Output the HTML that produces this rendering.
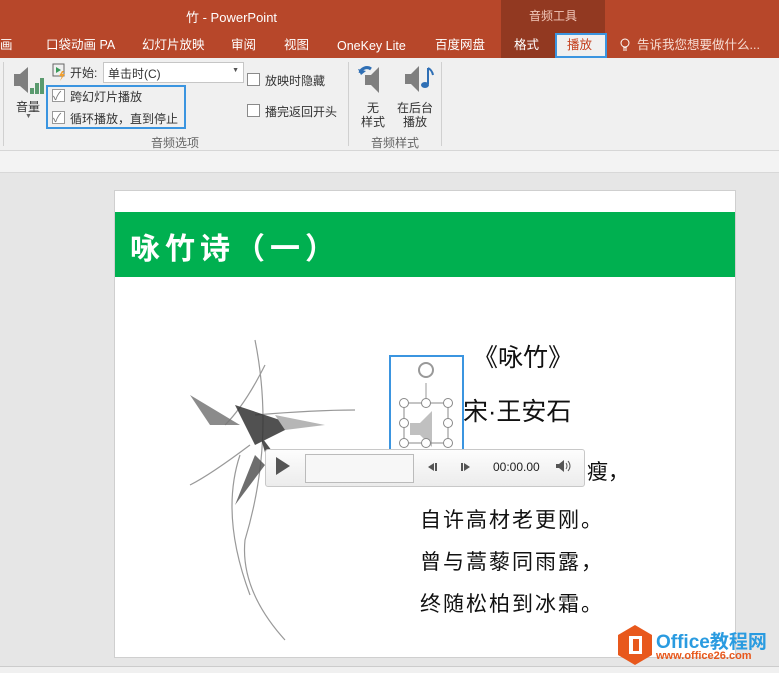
<!DOCTYPE html>
<html><head><meta charset="utf-8"><style>
*{margin:0;padding:0;box-sizing:border-box}
body{width:779px;height:673px;overflow:hidden;background:#e6e6e6;font-family:"Liberation Sans","Noto Sans CJK SC",sans-serif;position:relative;font-size:12px;color:#333}
.a{position:absolute;white-space:nowrap}
.t{position:absolute;white-space:nowrap;top:36px;color:#fff;font-size:12.5px;line-height:18px}
.cb{position:absolute;width:13px;height:13px;border:1px solid #8a8a8a;background:#fff}
</style></head><body>
<div class="a" style="left:0;top:0;width:779px;height:58px;background:#b7472a"></div>
<div class="a" style="left:501px;top:0;width:104px;height:58px;background:#923921"></div>
<div class="a" style="left:186px;top:7px;color:#fff;font-size:13px">竹 - PowerPoint</div>
<div class="a" style="left:529px;top:7px;color:#f3c9bb;font-size:12px">音频工具</div>
<div class="t" style="left:0">画</div>
<div class="t" style="left:46px">口袋动画 PA</div>
<div class="t" style="left:142px">幻灯片放映</div>
<div class="t" style="left:231px">审阅</div>
<div class="t" style="left:284px">视图</div>
<div class="t" style="left:337px;top:37px">OneKey Lite</div>
<div class="t" style="left:435px">百度网盘</div>
<div class="t" style="left:514px">格式</div>
<div class="a" style="top:33px;left:555px;width:52px;height:25px;background:#f0f0f0;border:2px solid #3b95e0"></div>
<div class="t" style="left:567px;color:#c43e1c">播放</div>
<svg class="a" style="left:620px;top:38px" width="10" height="15"><circle cx="5" cy="5" r="4" fill="none" stroke="#fff"/><path d="M3 10h4M3 12h4" stroke="#fff"/></svg>
<div class="t" style="left:637px;color:#f6dcd3">告诉我您想要做什么...</div>
<div class="a" style="left:0;top:58px;width:779px;height:93px;background:#f0f0f0;border-bottom:1px solid #d6d6d6"></div>
<div class="a" style="left:0;top:151px;width:779px;height:22px;background:#f3f3f3;border-bottom:1px solid #d8d8d8"></div>
<div class="a" style="left:3px;top:62px;width:1px;height:84px;background:#d0d0d0"></div>
<div class="a" style="left:348px;top:62px;width:1px;height:84px;background:#d0d0d0"></div>
<div class="a" style="left:441px;top:62px;width:1px;height:84px;background:#d0d0d0"></div>
<svg class="a" style="left:12px;top:64px" width="34" height="34"><path d="M2 10h6l8-7v26l-8-7H2z" fill="#7f7f7f"/><rect x="18" y="24" width="4" height="6" fill="#5a9a6e"/><rect x="23" y="19" width="4" height="11" fill="#5a9a6e"/><rect x="28" y="14" width="4" height="16" fill="#5a9a6e"/></svg>
<div class="a" style="left:16px;top:98px">音量</div>
<div class="a" style="left:25px;top:113px;font-size:7px;color:#666">▼</div>
<svg class="a" style="left:52px;top:63px" width="16" height="18"><rect x="1" y="1" width="11" height="12" fill="none" stroke="#666"/><path d="M4 4l5 3-5 3z" fill="#3a9a5a"/><path d="M10 8l-3 5h3l-2 5 5-7h-3l2-3z" fill="#f0a030"/></svg>
<div class="a" style="left:70px;top:64px">开始:</div>
<div class="a" style="left:103px;top:62px;width:141px;height:21px;background:#fff;border:1px solid #c6c6c6;padding:2px 4px">单击时(C)<span style="position:absolute;right:4px;top:4px;font-size:7px;color:#555">▼</span></div>
<div class="a" style="left:46px;top:85px;width:140px;height:44px;border:2px solid #3b95e0"></div>
<div class="cb" style="left:52px;top:89px;border-color:#999"></div><div class="a" style="left:53px;top:87px;color:#777;font-size:12px">✓</div>
<div class="a" style="left:70px;top:88px">跨幻灯片播放</div>
<div class="cb" style="left:52px;top:111px;border-color:#999"></div><div class="a" style="left:53px;top:109px;color:#777;font-size:12px">✓</div>
<div class="a" style="left:70px;top:110px">循环播放，直到停止</div>
<div class="cb" style="left:247px;top:73px"></div><div class="a" style="left:265px;top:72px">放映时隐藏</div>
<div class="cb" style="left:247px;top:104px"></div><div class="a" style="left:265px;top:103px">播完返回开头</div>
<div class="a" style="left:151px;top:134px;color:#666">音频选项</div>
<svg class="a" style="left:357px;top:63px" width="30" height="34"><path d="M8 12h6l8-8v26l-8-8H8z" fill="#7f7f7f"/><path d="M3 10a7 7 0 0 1 11-4" stroke="#2f6fb5" stroke-width="3" fill="none"/><path d="M1 6l3 6 5-4z" fill="#2f6fb5"/></svg>
<div class="a" style="left:367px;top:99px">无</div><div class="a" style="left:361px;top:113px">样式</div>
<svg class="a" style="left:403px;top:64px" width="32" height="34"><path d="M2 10h6l8-8v26l-8-8H2z" fill="#7f7f7f"/><path d="M25 4v16" stroke="#2f6fb5" stroke-width="2"/><ellipse cx="22" cy="21" rx="4" ry="3" fill="#2f6fb5"/><path d="M25 4q4 2 5 7" stroke="#2f6fb5" stroke-width="2" fill="none"/></svg>
<div class="a" style="left:397px;top:99px">在后台</div><div class="a" style="left:403px;top:113px">播放</div>
<div class="a" style="left:371px;top:134px;color:#666">音频样式</div>
<div class="a" style="left:114px;top:190px;width:622px;height:468px;background:#fff;border:1px solid #cfcfcf"></div>
<div class="a" style="left:115px;top:212px;width:620px;height:65px;background:#00b050"></div>
<div class="a" style="left:130px;top:224px;color:#fff;font-size:30px;font-weight:bold;letter-spacing:5px;font-family:'Noto Sans CJK SC',sans-serif">咏竹诗（一）</div>
<svg class="a" style="left:155px;top:335px" width="200" height="310"><g stroke="#999" fill="none" stroke-width="1.2"><path d="M100 5q20 100 -10 200 q-5 50 40 100"/><path d="M110 30q-20 40 -40 60"/><path d="M100 80q60 -5 100 -5"/><path d="M95 110q-40 30 -60 40"/><path d="M85 120q-20 60 10 140"/></g><g fill="#333" opacity=".85"><path d="M80 70l60 20-40 20z"/><path d="M85 90l-50 -30 20 30z" fill="#777"/><path d="M105 100l30 40-20-5z"/><path d="M120 80l50 10-40 5z" fill="#aaa"/><path d="M100 120l-20 50 30-40z" fill="#555"/></g></svg>
<div class="a" style="left:473px;top:338px;font-size:25px;color:#111">《咏竹》</div>
<div class="a" style="left:463px;top:392px;font-size:25px;color:#111">宋·王安石</div>
<div class="a" style="left:587px;top:456px;font-size:21px;color:#111">瘦，</div>
<div class="a" style="left:420px;top:500px;font-size:21px;color:#111;line-height:42px;letter-spacing:2px">自许高材老更刚。<br>曾与蒿藜同雨露，<br>终随松柏到冰霜。</div>
<div class="a" style="left:389px;top:355px;width:75px;height:97px;border:2px solid #3b95e0"></div>
<svg class="a" style="left:396px;top:355px" width="60" height="95"><path d="M30 28v20" stroke="#999"/><circle cx="30" cy="15" r="7" fill="none" stroke="#999" stroke-width="2"/><path d="M14 68h10l12-12v36l-12-12H14z" fill="#c0c0c0"/><rect x="8" y="48" width="44" height="40" fill="none" stroke="#888"/><g fill="#fff" stroke="#888"><circle cx="8" cy="48" r="4.5"/><circle cx="30" cy="48" r="4.5"/><circle cx="52" cy="48" r="4.5"/><circle cx="8" cy="68" r="4.5"/><circle cx="52" cy="68" r="4.5"/><circle cx="8" cy="88" r="4.5"/><circle cx="30" cy="88" r="4.5"/><circle cx="52" cy="88" r="4.5"/></g></svg>
<div class="a" style="left:265px;top:449px;width:320px;height:38px;background:linear-gradient(#fdfdfd,#ececec);border:1px solid #c8c8c8;border-radius:3px"></div>
<div class="a" style="left:276px;top:457px;width:0;height:0;border-left:14px solid #555;border-top:9px solid transparent;border-bottom:9px solid transparent"></div>
<div class="a" style="left:305px;top:454px;width:109px;height:29px;background:#f7f7f7;border:1px solid #bbb"></div>
<svg class="a" style="left:426px;top:461px" width="50" height="12"><path d="M8 2v8L2 6z M9 2h2v8H9z" fill="#555"/><path d="M35 2h2v8h-2z M38 2v8l6-4z" fill="#555"/></svg>
<div class="a" style="left:493px;top:460px;font-size:12px;color:#222">00:00.00</div>
<svg class="a" style="left:555px;top:459px" width="18" height="14"><path d="M1 5h3l5-4v12l-5-4H1z" fill="#555"/><path d="M11 4q2 3 0 6M13 2q4 5 0 10" stroke="#555" fill="none"/></svg>
<div class="a" style="left:0;top:666px;width:779px;height:7px;background:#f0f0f0;border-top:1px solid #ccc"></div>
<svg class="a" style="left:616px;top:624px" width="38" height="42"><path d="M19 1l17 10v20l-17 10-17-10V11z" fill="#e8581c"/><rect x="13" y="12" width="13" height="18" fill="#fff"/><rect x="17" y="15" width="6" height="12" fill="#e8581c"/></svg>
<div class="a" style="left:656px;top:627px;font-size:19px;font-weight:bold;color:#2a9be0">Office教程网</div>
<div class="a" style="left:656px;top:650px;font-size:11px;font-weight:bold;color:#e8581c">www.office26.com</div>
</body></html>
